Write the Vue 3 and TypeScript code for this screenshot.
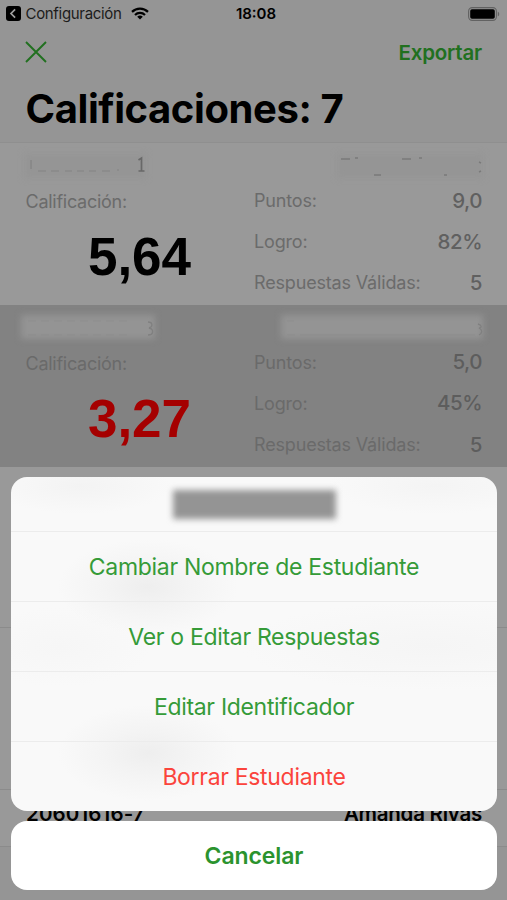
<script setup lang="ts">
interface Metric {
  label: string
  value: string
}

interface Grade {
  id: number
  score: string
  failed: boolean
  metrics: Metric[]
}

interface SheetAction {
  text: string
  danger?: boolean
}

const grades: Grade[] = [
  {
    id: 1,
    score: '5,64',
    failed: false,
    metrics: [
      { label: 'Puntos:', value: '9,0' },
      { label: 'Logro:', value: '82%' },
      { label: 'Respuestas Válidas:', value: '5' },
    ],
  },
  {
    id: 2,
    score: '3,27',
    failed: true,
    metrics: [
      { label: 'Puntos:', value: '5,0' },
      { label: 'Logro:', value: '45%' },
      { label: 'Respuestas Válidas:', value: '5' },
    ],
  },
]

const actions: SheetAction[] = [
  { text: 'Cambiar Nombre de Estudiante' },
  { text: 'Ver o Editar Respuestas' },
  { text: 'Editar Identificador' },
  { text: 'Borrar Estudiante', danger: true },
]
</script>

<template>
  <div class="screen">
    <header class="header">
      <div class="status">
        <div class="status-left">
          <svg class="back" viewBox="0 0 15 15" width="15" height="15">
            <rect width="15" height="15" rx="3" fill="#000" />
            <path d="M9.1 3.4 5 7.5l4.1 4.1" fill="none" stroke="#a0a0a0" stroke-width="1.7" />
          </svg>
          <span class="back-label">Configuración</span>
          <svg class="wifi" viewBox="0 0 18 13" width="18" height="13">
            <g fill="none" stroke="#000" stroke-width="2.2">
              <path d="M1 4.9a11.4 11.4 0 0 1 16 0" />
              <path d="M4 8a7.1 7.1 0 0 1 10 0" />
            </g>
            <path d="M9 12.6 6.2 9.8a4 4 0 0 1 5.6 0z" fill="#000" />
          </svg>
        </div>
        <span class="clock">18:08</span>
        <svg class="battery" viewBox="0 0 32 14" width="32" height="14">
          <rect x=".6" y=".6" width="27.8" height="12.8" rx="3.6" fill="none" stroke="#626262" stroke-width="1.1" />
          <rect x="2.2" y="2.2" width="24.6" height="9.6" rx="1.8" fill="#000" />
          <path d="M29.8 4.7c1.9.6 1.9 4 0 4.6z" fill="#626262" />
        </svg>
      </div>
      <nav class="nav">
        <svg class="close" viewBox="0 0 22 22" width="22" height="22">
          <path d="m1 1 20 20M21 1 1 21" fill="none" stroke="#21701f" stroke-width="1.9" />
        </svg>
        <span class="export">Exportar</span>
      </nav>
      <h1 class="title">Calificaciones: 7</h1>
    </header>

    <section v-for="g in grades" :key="g.id" class="row graded" :class="{ selected: g.failed }">
      <div class="redacted">
        <div class="patch patch-id" />
        <div class="patch patch-name" />
        <svg v-if="!g.failed" class="traces" viewBox="0 0 507 45" width="507" height="45">
          <path d="M31 17v9M38 28h8m5 0h8m6 0h7m5 0h7m5 0h7m6 0h8m7-1h2" fill="none" stroke="#838383" stroke-width="1.2" />
          <path d="m138.5 17 3-2v13m-3 0h6" fill="none" stroke="#686868" stroke-width="1.7" />
          <path d="M341 16h9m5-1h3m44 1h9m8-1h3M374 32h7m63 0h3M479 19l2 1m-2 9 2-1" fill="none" stroke="#7a7a7a" stroke-width="1.4" />
        </svg>
        <svg v-else class="traces" viewBox="0 0 507 45" width="507" height="45">
          <path d="M28 16h8m5 0h8m5 0h8m5 0h8m5 0h8m5 0h8m5 0h8m5 0h8M28 30h8m5 0h8m5 0h8m5 0h8m5 0h8m5 0h8m5 0h8m5 0h8M294 16h-7m0 14h8m5 0h175" fill="none" stroke="#8d8d8d" stroke-width="1" />
          <path d="M148 17c5 0 5 5 1 6 5 1 5 7-1 7M478 19c4 1 4 4 1 4 4 2 3 6 0 7" fill="none" stroke="#808080" stroke-width="1.3" />
        </svg>
      </div>
      <div class="details">
        <div class="grade">
          <span class="label">Calificación:</span>
          <strong class="score" :class="{ failed: g.failed }">{{ g.score }}</strong>
        </div>
        <div class="metrics">
          <div v-for="m in g.metrics" :key="m.label" class="metric">
            <span class="label">{{ m.label }}</span>
            <span class="value">{{ m.value }}</span>
          </div>
        </div>
      </div>
    </section>
    <section class="row" />
    <section class="row" />
    <section class="row last">
      <span class="student-id">20601616-7</span>
      <span class="student-name">Amanda Rivas</span>
    </section>
    <footer class="toolbar" />

    <div class="sheet">
      <div class="panel">
        <div class="panel-head"><div class="panel-name" /></div>
        <button v-for="a in actions" :key="a.text" class="action" :class="{ danger: a.danger }">
          {{ a.text }}
        </button>
      </div>
      <button class="cancel">Cancelar</button>
    </div>
  </div>
</template>

<style>
body {
  background: #999;
}
</style>

<style scoped>
.screen {
  position: relative;
  box-sizing: border-box;
  width: 507px;
  height: 900px;
  overflow: hidden;
  background: #999;
  color: #000;
  font-family: Inter, 'Liberation Sans', sans-serif;
}
.header {
  box-sizing: border-box;
  height: 143px;
  background: #959595;
  border-bottom: 1px solid #8f8f8f;
}
.status {
  display: grid;
  grid-template-columns: 1fr auto 1fr;
  align-items: center;
  height: 27px;
  padding: 0 7px 0 6px;
}
.status-left {
  display: flex;
  align-items: center;
}
.back-label {
  margin-left: 4.5px;
  font-size: 15px;
  letter-spacing: -0.32px;
  color: #1c1c1c;
}
.wifi {
  margin-left: 9px;
}
.clock {
  padding-left: 6px;
  font-size: 15px;
  font-weight: 600;
}
.battery {
  justify-self: end;
}
.nav {
  display: flex;
  align-items: center;
  justify-content: space-between;
  height: 50px;
  padding: 0 25px;
}
.export {
  font-size: 20.5px;
  font-weight: 600;
  letter-spacing: -0.2px;
  color: #21701f;
}
.title {
  margin: 7px 0 0 25.5px;
  font-size: 40px;
  line-height: 50px;
  font-weight: 700;
  letter-spacing: -0.42px;
}
.row {
  box-sizing: border-box;
  height: 161.8px;
  border-bottom: 1px solid #8b8b8b;
}
.row.graded {
  border-bottom-color: transparent;
}
.row.selected {
  background: #828282;
}
.redacted {
  position: relative;
  display: flex;
  justify-content: space-between;
  align-items: center;
  height: 45px;
  padding: 0 24px;
}
.patch {
  width: 122px;
  height: 24px;
  background: #959595;
  filter: blur(3px);
}
.patch-name {
  width: 146px;
}
.selected .patch {
  width: 134px;
  background: #949494;
  margin-left: -3px;
}
.selected .patch-name {
  width: 202px;
}
.traces {
  position: absolute;
  inset: 0;
  filter: blur(0.7px);
}
.details {
  display: grid;
  grid-template-columns: 228px 1fr;
  padding: 0 25px 0 26px;
}
.grade {
  display: flex;
  flex-direction: column;
}
.label {
  font-size: 18px;
  line-height: 26px;
  letter-spacing: -0.17px;
  color: #6b6b6b;
}
.grade .label {
  margin: 1px 0 0 -0.5px;
  letter-spacing: -0.27px;
}
.score {
  align-self: center;
  margin: 12px 0 0 -1px;
  font: 700 53px/60px 'Liberation Sans', Arial, sans-serif;
}
.score.failed {
  color: #a50000;
}
.metrics {
  display: flex;
  flex-direction: column;
  gap: 15.2px;
}
.metric {
  display: flex;
  justify-content: space-between;
  align-items: center;
  height: 26px;
}
.value {
  margin-top: -2px;
  font-size: 20.5px;
  font-weight: 500;
  letter-spacing: -0.5px;
  color: #606060;
}
.selected .label {
  color: #6a6a6a;
}
.selected .value {
  color: #5d5d5d;
}
.last {
  display: flex;
  justify-content: space-between;
  height: 57px;
  padding: 11px 25px 0 26px;
  font-size: 20.5px;
  line-height: 25px;
  font-weight: 600;
}
.student-id {
  letter-spacing: 0.15px;
}
.student-name {
  letter-spacing: -0.25px;
}
.toolbar {
  height: 53px;
  background: #959595;
}
.sheet {
  position: absolute;
  left: 11px;
  right: 10px;
  bottom: 10px;
  display: flex;
  flex-direction: column;
  gap: 10px;
}
.panel {
  overflow: hidden;
  border-radius: 16px;
  background:
    radial-gradient(90px 28px at 70px 9px, #f3f3f3, transparent),
    radial-gradient(110px 28px at 425px 9px, #f4f4f4, transparent),
    radial-gradient(90px 48px at 137px 110px, #eee, #f4f4f4 50%, transparent),
    radial-gradient(90px 48px at 137px 276px, #eee, #f4f4f4 50%, transparent),
    radial-gradient(190px 45px at 420px 169px, #f5f5f5, transparent),
    radial-gradient(90px 40px at 50px 170px, #f6f6f6, transparent),
    #f9f9f9;
}
.panel-head {
  display: flex;
  justify-content: center;
  align-items: center;
  height: 54px;
}
.panel-name {
  width: 163px;
  height: 29px;
  background: #949494;
  filter: blur(3px);
}
.action,
.cancel {
  display: block;
  box-sizing: border-box;
  width: 100%;
  margin: 0;
  padding: 0;
  border: 0;
  font-family: inherit;
  font-size: 23px;
  text-align: center;
  color: #359b38;
}
.action {
  height: 70px;
  border-top: 1px solid #ececec;
  background: none;
  letter-spacing: -0.31px;
}
.action.danger {
  color: #fb443c;
}
.cancel {
  height: 69px;
  border-radius: 16px;
  background: #fff;
  font-weight: 600;
  letter-spacing: -0.1px;
  color: #2b932e;
}
</style>
